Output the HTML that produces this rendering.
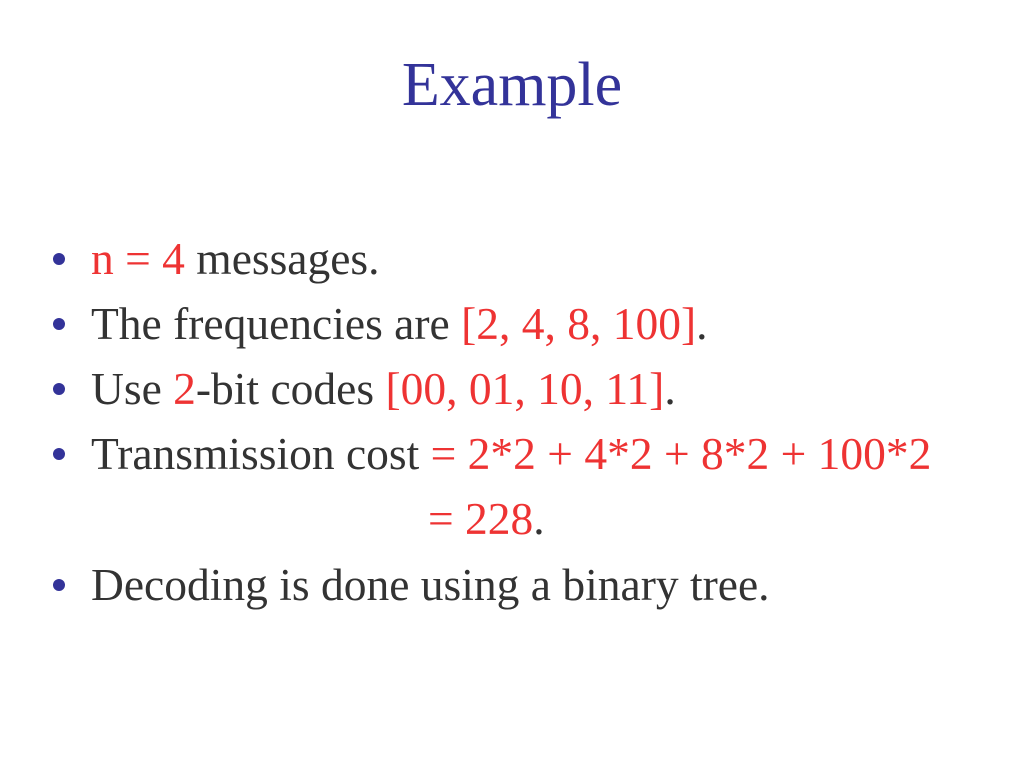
<!DOCTYPE html>
<html><head><style>
body{margin:0;width:1024px;height:768px;background:#fff;position:relative;font-family:"Liberation Serif",serif;overflow:hidden}
.t{position:absolute;top:50px;left:0;width:1024px;text-align:center;color:#333399;font-size:62px;line-height:70px}
.l{position:absolute;left:91px;font-size:45.5px;color:#333333;white-space:nowrap;line-height:46px}
.b{position:absolute;left:53px;width:12px;height:12px;border-radius:50%;background:#333399}
.r{color:#ee3333}
</style></head><body>
<div class="t">Example</div>
<div class="b" style="top:253px"></div><div class="l" style="top:236px"><span class="r">n = 4</span> messages.</div>
<div class="b" style="top:318px"></div><div class="l" style="top:301px">The frequencies are <span class="r">[2, 4, 8, 100]</span>.</div>
<div class="b" style="top:383px"></div><div class="l" style="top:366px">Use <span class="r">2</span>-bit codes <span class="r">[00, 01, 10, 11]</span>.</div>
<div class="b" style="top:448px"></div><div class="l" style="top:431px">Transmission cost <span class="r">= 2*2 + 4*2 + 8*2 + 100*2</span></div>
<div class="l" style="top:496px;left:428px"><span class="r">= 228</span>.</div>
<div class="b" style="top:579px"></div><div class="l" style="top:562px">Decoding is done using a binary tree.</div>
</body></html>
